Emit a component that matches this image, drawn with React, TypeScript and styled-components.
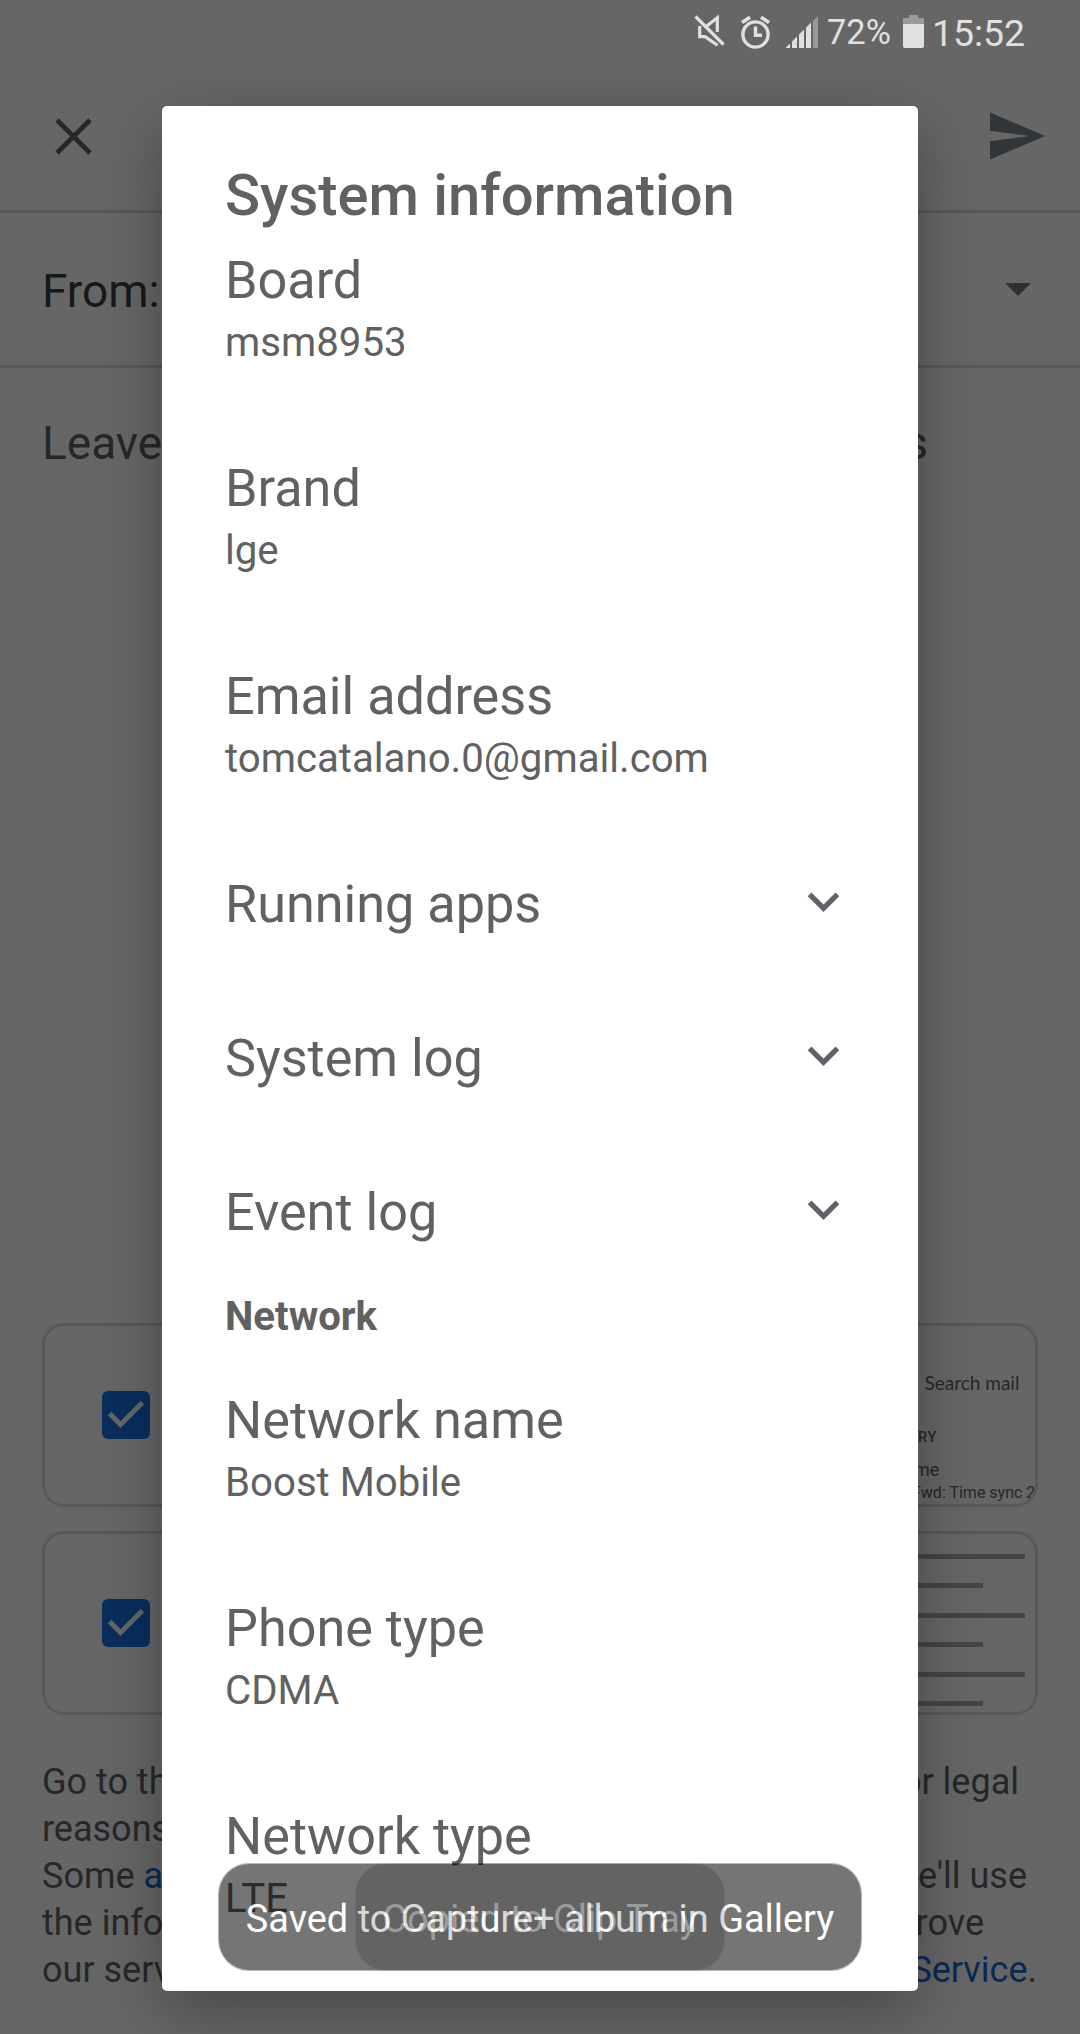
import React from "react";
import styled, { createGlobalStyle } from "styled-components";

const GlobalStyle = createGlobalStyle`
  * { box-sizing: border-box; }
  body { margin: 0; background: #666; }
`;

const Screen = styled.div`
  position: relative;
  width: 1080px;
  height: 2034px;
  overflow: hidden;
  background: #fff;
  font-family: Roboto, "Liberation Sans", sans-serif;
  font-weight: 400;
`;

const Page = styled.div`
  display: flex;
  flex-direction: column;
  height: 2034px;
  padding-top: 63px;
`;

const AppBar = styled.header`
  display: flex;
  align-items: center;
  justify-content: space-between;
  height: 150px;
  padding: 0 35px 1px 55px;
  border-bottom: 3px solid #dadce0;
`;

const FromRow = styled.div`
  display: flex;
  align-items: center;
  justify-content: space-between;
  height: 155px;
  padding: 0 49px 0 42px;
  border-bottom: 3px solid #dadce0;
  font-size: 46px;
  line-height: 54px;
  color: #3c4043;
`;

const FromLabel = styled.span`
  padding-top: 3px;
`;

const Comment = styled.div`
  display: flex;
  justify-content: space-between;
  flex: 1;
  padding: 48px 152px 0 42px;
  font-size: 46px;
  line-height: 54px;
  color: #5f6368;
`;

const Cards = styled.div`
  display: flex;
  flex-direction: column;
  gap: 24px;
  padding: 0 42px;
`;

const Card = styled.div`
  display: flex;
  align-items: center;
  justify-content: space-between;
  height: 184px;
  padding-left: 57px;
  border: 3px solid #dadce0;
  border-radius: 22px;
  overflow: hidden;
`;

const Checkbox = styled.span`
  display: flex;
  width: 48px;
  height: 48px;
  border-radius: 6px;
  background: #1a73e8;
`;

const MailPreview = styled.div`
  display: flex;
  flex-direction: column;
  align-self: stretch;
  width: 135px;
  overflow: hidden;
  white-space: nowrap;
  color: #5f6368;
`;

const PreviewLine = styled.span<{ $size: number; $top: number; $left: number; $weight?: number; $track?: number }>`
  margin-top: ${(p) => p.$top}px;
  padding-left: ${(p) => p.$left}px;
  font-size: ${(p) => p.$size}px;
  line-height: 20px;
  font-weight: ${(p) => p.$weight ?? 400};
  letter-spacing: ${(p) => p.$track ?? 0}px;
`;

const SearchLine = styled(PreviewLine)`
  font-family: Lato, Roboto, sans-serif;
`;

const LogPreview = styled.div`
  display: flex;
  flex-direction: column;
  align-self: stretch;
  gap: 24.4px;
  width: 125px;
  margin-right: 10px;
  padding-top: 20px;
`;

const LogLine = styled.span<{ $short?: boolean }>`
  flex: none;
  width: ${(p) => (p.$short ? 83 : 125)}px;
  height: 5px;
  background: #adadad;
`;

const Legal = styled.div`
  display: flex;
  flex-direction: column;
  padding: 44px 42px 40px;
  font-size: 36px;
  line-height: 47px;
  color: #5f6368;
`;

const LegalLine = styled.div<{ $right: number }>`
  display: flex;
  justify-content: space-between;
  height: 47px;
  padding-right: ${(p) => p.$right}px;
  white-space: pre;
`;

const Link = styled.a`
  color: #1967d2;
`;

const Scrim = styled.div`
  position: absolute;
  inset: 0;
  background: rgba(0, 0, 0, 0.6);
`;

const StatusBar = styled.div`
  position: absolute;
  top: 0;
  left: 0;
  right: 0;
  display: flex;
  align-items: center;
  justify-content: flex-end;
  height: 64px;
  padding-right: 55px;
  color: #e0e0e0;
`;

const Battery = styled.span`
  font-size: 34.4px;
  line-height: 64px;
  margin: 0 12px 0 9px;
`;

const Clock = styled.span`
  font-size: 37.4px;
  line-height: 64px;
  padding-top: 1px;
  margin-left: 8px;
`;

const Dialog = styled.section`
  position: absolute;
  top: 106px;
  left: 162px;
  display: flex;
  flex-direction: column;
  width: 756px;
  height: 1885px;
  padding: 54px 63px 0;
  border-radius: 5px;
  overflow: hidden;
  background: #fff;
  box-shadow: 0 20px 64px rgba(0, 0, 0, 0.3);
  color: #616161;
`;

const Title = styled.h1`
  flex: none;
  height: 89px;
  margin: 0;
  font-size: 57.9px;
  line-height: 70px;
  font-weight: 500;
`;

const Item = styled.div`
  flex: none;
  display: flex;
  flex-direction: column;
  gap: 6px;
  height: 208px;
`;

const Expandable = styled.div<{ $height: number }>`
  flex: none;
  display: flex;
  justify-content: space-between;
  height: ${(p) => p.$height}px;

  svg {
    margin-top: -3px;
  }
`;

const Label = styled.span`
  font-size: 52.2px;
  line-height: 64px;
`;

const Value = styled.span`
  font-size: 40.2px;
  line-height: 48px;
`;

const Section = styled.h2`
  flex: none;
  height: 97px;
  margin: 0;
  padding-top: 1px;
  font-size: 40.2px;
  line-height: 48px;
  font-weight: 700;
`;

const ToastLayer = styled.div`
  position: absolute;
  left: 0;
  right: 0;
  top: 1863px;
  display: grid;
  justify-items: center;
`;

const Toast = styled.div<{ $width: number; $fading?: boolean }>`
  grid-area: 1 / 1;
  display: flex;
  align-items: center;
  justify-content: center;
  width: ${(p) => p.$width}px;
  height: 108px;
  border: 1px solid rgba(0, 0, 0, 0.28);
  border-radius: 31px;
  background: rgba(0, 0, 0, 0.54);
  background-clip: padding-box;
  color: #fff;
  font-size: 37.9px;
  line-height: 48px;
  padding-top: 3px;
  white-space: nowrap;
  opacity: ${(p) => (p.$fading ? 0.28 : 1)};
`;

const CloseIcon = () => (
  <svg width="37" height="37" viewBox="0 0 37 37" fill="none" stroke="#5f6368" strokeWidth="4.8">
    <path d="M2 2L35 35M35 2L2 35" />
  </svg>
);

const SendIcon = () => (
  <svg width="55" height="48" viewBox="2 3 21 18" fill="#7d868c">
    <path d="M2.01 21L23 12 2.01 3 2 10l15 2-15 2z" />
  </svg>
);

const CaretIcon = () => (
  <svg width="26" height="13" viewBox="0 0 26 13" fill="#757575">
    <path d="M0 0h26L13 13z" />
  </svg>
);

const CheckIcon = () => (
  <svg width="48" height="48" viewBox="0 0 48 48" fill="none" stroke="#fff" strokeWidth="4.8">
    <path d="M7.5 22.5L18.5 33.5L40.5 11.5" />
  </svg>
);

const ChevronIcon = () => (
  <svg width="63" height="63" viewBox="0 0 24 24" fill="#5f6368">
    <path d="M16.59 8.59L12 13.17 7.41 8.59 6 10l6 6 6-6z" />
  </svg>
);

const StatusIcons = () => (
  <svg width="125" height="64" viewBox="693 0 125 64" fill="none" stroke="#e0e0e0">
    <path d="M705.5 27L717.3 17.8V32M699.7 26V36.6H705L717.5 45.3" strokeWidth="3.2" />
    <path d="M695.5 16.5L723.5 44.5" strokeWidth="3.2" />
    <circle cx="755.5" cy="34.5" r="12.6" strokeWidth="3.4" />
    <path d="M755.5 26.5V35.3H762" strokeWidth="3.4" />
    <path d="M742 22.5L750 17.2M769 22.5L761 17.2" strokeWidth="3.6" />
    <g fill="#e0e0e0" stroke="none">
      <path d="M785.5 48L790 43.5V48z" />
      <path d="M792 48V41.5L797 36.5V48z" />
      <path d="M799 48V34.5L804 29.5V48z" />
      <path d="M806 48V27.8L811 22.5V48z" />
      <path d="M813 48V21L818 16V48z" fill="#999" />
    </g>
  </svg>
);

const BatteryIcon = () => (
  <svg width="21" height="34" viewBox="0 0 21 34">
    <path d="M0 9V3h6V0h9v3h6v6z" fill="#999" />
    <path d="M0 9h21v22a2 2 0 0 1-2 2H2a2 2 0 0 1-2-2z" fill="#e0e0e0" />
  </svg>
);

const InfoItem = ({ label, value }: { label: string; value: string }) => (
  <Item>
    <Label>{label}</Label>
    <Value>{value}</Value>
  </Item>
);

const LogItem = ({ label, height = 154 }: { label: string; height?: number }) => (
  <Expandable $height={height}>
    <Label>{label}</Label>
    <ChevronIcon />
  </Expandable>
);

export default function App() {
  return (
    <>
      <GlobalStyle />
      <Screen>
        <Page>
          <AppBar>
            <CloseIcon />
            <SendIcon />
          </AppBar>
          <FromRow>
            <FromLabel>From:</FromLabel>
            <CaretIcon />
          </FromRow>
          <Comment>
            <span>Leave</span>
            <span>s</span>
          </Comment>
          <Cards>
            <Card>
              <Checkbox>
                <CheckIcon />
              </Checkbox>
              <MailPreview>
                <SearchLine $size={19} $top={47} $left={24.5}>Search mail</SearchLine>
                <PreviewLine $size={14.5} $top={35} $left={18} $weight={500} $track={0.8}>RY</PreviewLine>
                <PreviewLine $size={18} $top={12} $left={14}>me</PreviewLine>
                <PreviewLine $size={16} $top={3} $left={12}>Fwd: Time sync 2</PreviewLine>
              </MailPreview>
            </Card>
            <Card>
              <Checkbox>
                <CheckIcon />
              </Checkbox>
              <LogPreview>
                <LogLine />
                <LogLine $short />
                <LogLine />
                <LogLine $short />
                <LogLine />
                <LogLine $short />
              </LogPreview>
            </Card>
          </Cards>
          <Legal>
            <LegalLine $right={19}>
              <span>Go to th</span>
              <span>or legal</span>
            </LegalLine>
            <LegalLine $right={0}>
              <span>reasons</span>
            </LegalLine>
            <LegalLine $right={11}>
              <span>Some <Link>a</Link></span>
              <span>We'll use</span>
            </LegalLine>
            <LegalLine $right={54}>
              <span>the info</span>
              <span>rove</span>
            </LegalLine>
            <LegalLine $right={1}>
              <span>our serv</span>
              <span><Link>Service</Link>.</span>
            </LegalLine>
          </Legal>
        </Page>
        <Scrim />
        <StatusBar>
          <StatusIcons />
          <Battery>72%</Battery>
          <BatteryIcon />
          <Clock>15:52</Clock>
        </StatusBar>
        <Dialog>
          <Title>System information</Title>
          <InfoItem label="Board" value="msm8953" />
          <InfoItem label="Brand" value="lge" />
          <InfoItem label="Email address" value="tomcatalano.0@gmail.com" />
          <LogItem label="Running apps" />
          <LogItem label="System log" />
          <LogItem label="Event log" height={111} />
          <Section>Network</Section>
          <InfoItem label="Network name" value="Boost Mobile" />
          <InfoItem label="Phone type" value="CDMA" />
          <InfoItem label="Network type" value="LTE" />
        </Dialog>
        <ToastLayer>
          <Toast $width={644}>Saved to Capture+ album in Gallery</Toast>
          <Toast $width={370} $fading>Copied to Clip Tray</Toast>
        </ToastLayer>
      </Screen>
    </>
  );
}
